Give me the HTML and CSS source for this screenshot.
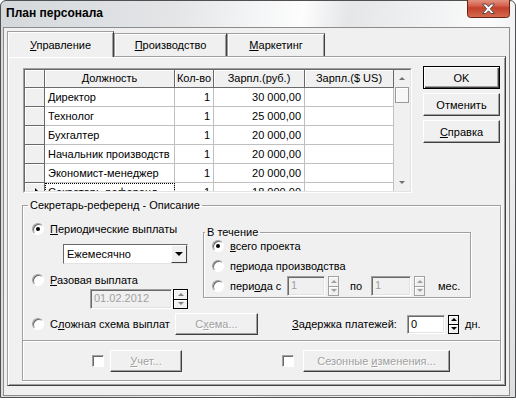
FILE: index.html
```html
<!DOCTYPE html>
<html lang="ru">
<head>
    <meta charset="UTF-8">
    <title>План персонала</title>
    <link rel="stylesheet" href="styles.css">
</head>
<body>
<div class="window">
    <div class="titlebar">
        <div class="title">План персонала</div>
        <div class="close-btn">
            <svg width="43" height="18" viewBox="0 0 43 18">
                <defs>
                    <linearGradient id="cg" x1="0" y1="0" x2="0" y2="1">
                        <stop offset="0" stop-color="#ebb4a6"/>
                        <stop offset="0.45" stop-color="#d5624d"/>
                        <stop offset="0.55" stop-color="#c2402c"/>
                        <stop offset="1" stop-color="#d56c50"/>
                    </linearGradient>
                </defs>
                <rect x="0.5" y="-4" width="42" height="21.5" rx="3" fill="url(#cg)" stroke="#6b2316"/>
                <path d="M15.5 4 L19 4 L21.5 6.8 L24 4 L27.5 4 L23.3 8.8 L27.5 13.5 L24 13.5 L21.5 10.8 L19 13.5 L15.5 13.5 L19.7 8.8 Z" fill="#fff" stroke="#5b4b49" stroke-width="1"/>
            </svg>
        </div>
    </div>

    <div class="client">
        <div class="tabs">
            <div class="tab active"><u>У</u>правление</div>
            <div class="tab tab-prod"><u>П</u>роизводство</div>
            <div class="tab tab-mark"><u>М</u>аркетинг</div>
        </div>

        <div class="panel">
            <div class="top">
                <div class="grid">
                    <div class="grid-inner">
                        <div class="table">
                            <div class="hc"></div>
                            <div class="hc">Должность</div>
                            <div class="hc">Кол-во</div>
                            <div class="hc">Зарпл.(руб.)</div>
                            <div class="hc">Зарпл.($ US)</div>

                            <div class="ic"></div>
                            <div class="c">Директор</div>
                            <div class="c num">1</div>
                            <div class="c num">30 000,00</div>
                            <div class="c"></div>

                            <div class="ic"></div>
                            <div class="c">Технолог</div>
                            <div class="c num">1</div>
                            <div class="c num">25 000,00</div>
                            <div class="c"></div>

                            <div class="ic"></div>
                            <div class="c">Бухгалтер</div>
                            <div class="c num">1</div>
                            <div class="c num">20 000,00</div>
                            <div class="c"></div>

                            <div class="ic"></div>
                            <div class="c">Начальник производств</div>
                            <div class="c num">1</div>
                            <div class="c num">20 000,00</div>
                            <div class="c"></div>

                            <div class="ic"></div>
                            <div class="c">Экономист-менеджер</div>
                            <div class="c num">1</div>
                            <div class="c num">20 000,00</div>
                            <div class="c"></div>

                            <div class="ic current"></div>
                            <div class="c focus">Секретарь-референд</div>
                            <div class="c num">1</div>
                            <div class="c num">18 000,00</div>
                            <div class="c"></div>
                        </div>
                        <div class="vscroll">
                            <div class="sb-btn sb-up"></div>
                            <div class="sb-thumb"></div>
                            <div class="sb-track"></div>
                            <div class="sb-btn sb-down"></div>
                        </div>
                    </div>
                </div>

                <div class="buttons">
                    <button class="btn default">OK</button>
                    <button class="btn">Отменить</button>
                    <button class="btn"><u>С</u>правка</button>
                </div>
            </div>

            <fieldset class="group main-group">
                <legend>Секретарь-референд - Описание</legend>

                <div class="upper">
                    <div class="left-col">
                        <div class="opt opt-first">
                            <span class="radio on"></span>
                            <span><u>П</u>ериодические выплаты</span>
                        </div>
                        <div class="combo">
                            <span class="combo-text">Ежемесячно</span>
                            <span class="combo-btn"></span>
                        </div>
                        <div class="opt opt-second">
                            <span class="radio"></span>
                            <span><u>Р</u>азовая выплата</span>
                        </div>
                        <div class="date-row">
                            <span class="field dis date-field">01.02.2012</span>
                            <span class="spin spin-date"><span class="up"></span><span class="down"></span></span>
                        </div>
                    </div>

                    <fieldset class="group during">
                        <legend>В течение</legend>
                        <div class="opt d1">
                            <span class="radio on"></span>
                            <span><u>в</u>сего проекта</span>
                        </div>
                        <div class="opt d2">
                            <span class="radio"></span>
                            <span>п<u>е</u>риода производства</span>
                        </div>
                        <div class="opt d3">
                            <span class="radio"></span>
                            <span class="lbl-from">пери<u>о</u>да с</span>
                            <span class="field dis from-field">1</span>
                            <span class="spin dis"><span class="up"></span><span class="down"></span></span>
                            <span class="lbl-to">по</span>
                            <span class="field dis to-field">1</span>
                            <span class="spin dis"><span class="up"></span><span class="down"></span></span>
                            <span class="lbl-mes">мес.</span>
                        </div>
                    </fieldset>
                </div>

                <div class="complex-row">
                    <div class="opt">
                        <span class="radio"></span>
                        <span class="lbl-complex">С<u>л</u>ожная схема выплат</span>
                    </div>
                    <button class="btn dis scheme-btn">С<u>х</u>ема...</button>
                    <span class="lbl-delay"><u>З</u>адержка платежей:</span>
                    <span class="field delay-field">0</span>
                    <span class="spin"><span class="up"></span><span class="down"></span></span>
                    <span class="lbl-days">дн.</span>
                </div>

                <div class="bottom-row">
                    <span class="check check-account"></span>
                    <button class="btn dis account-btn"><u>У</u>чет...</button>
                    <span class="check check-season"></span>
                    <button class="btn dis season-btn">Сезонные <u>и</u>зменения...</button>
                </div>
            </fieldset>
        </div>
    </div>
</div>
</body>
</html>
```

FILE: styles.css
```css
* {
    box-sizing: border-box;
}

body {
    margin: 0;
    background: #fff;
    font-family: "Liberation Sans", Arial, sans-serif;
    font-size: 11px;
    color: #000;
}

u {
    text-decoration: underline;
    text-underline-offset: 1px;
}

/* window frame */
.window {
    width: 516px;
    height: 398px;
    display: flex;
    flex-direction: column;
    padding: 0 5px 1px 2px;
    border: 1px solid #505050;
    border-radius: 6px 6px 0 0;
    background: linear-gradient(100deg, #d5d8db 0%, #e3e5e7 30%, #f4f5f6 44%, #fdfdfd 52%, #e4e6e8 60%, #eef0f1 72%, #fbfbfb 84%, #dcdfe2 100%);
    box-shadow: 0 2px 0 #3c9fae;
}

.titlebar {
    flex: none;
    height: 26px;
    display: flex;
    justify-content: space-between;
    align-items: flex-start;
}

.title {
    margin: 5px 0 0 3px;
    font-size: 12px;
    font-weight: bold;
    line-height: 14px;
}

.close-btn {
    margin-top: -1px;
    height: 18px;
}

.close-btn svg {
    display: block;
}

.client {
    flex: 1;
    display: flex;
    flex-direction: column;
    padding: 0 3px;
    background: #f0f0f0;
    border: 1px solid #8c8c8c;
}

/* tabs */
.tabs {
    flex: none;
    display: flex;
    align-items: flex-end;
    height: 29px;
    margin-bottom: -1px;
    position: relative;
    z-index: 1;
}

.tab {
    height: 23px;
    margin-bottom: 1px;
    padding-top: 4px;
    line-height: 14px;
    text-align: center;
    background: #f0f0f0;
    border: 1px solid;
    border-bottom: none;
    border-color: #a0a0a0 #404040 transparent #a0a0a0;
    box-shadow: inset 1px 1px #fff, inset -1px 0 #a0a0a0;
}

.tab.active {
    width: 107px;
    height: 26px;
    margin-bottom: 0;
    padding-top: 6px;
}

.tab-prod {
    width: 113px;
}

.tab-mark {
    width: 98px;
}

.panel {
    flex: none;
    display: flex;
    flex-direction: column;
    padding: 9px 4px 4px 14px;
    border: 1px solid;
    border-color: #a0a0a0 #404040 #404040 #a0a0a0;
    box-shadow: inset 1px 1px #fff, inset -1px -1px #a0a0a0;
}

.top {
    display: flex;
    align-items: flex-start;
}

/* data grid */
.grid {
    width: 389px;
    height: 125px;
    margin: 2px 0 0 1px;
    border: 1px solid;
    border-color: #a0a0a0 #fff #fff #a0a0a0;
}

.grid-inner {
    height: 100%;
    display: flex;
    overflow: hidden;
    border: 1px solid;
    border-color: #696969 #e3e3e3 #e3e3e3 #696969;
}

.table {
    width: 369px;
    flex: none;
    display: grid;
    grid-template-columns: 20px 130px 39px 91px 89px;
    grid-template-rows: 18px;
    grid-auto-rows: 19px;
    align-content: start;
    background: #fff;
}

.hc,
.ic {
    background: #f0f0f0;
    border-right: 1px solid #696969;
    border-bottom: 1px solid #696969;
    box-shadow: inset 1px 1px #fff;
}

.hc {
    text-align: center;
    line-height: 17px;
}

.ic.current {
    display: flex;
    align-items: center;
    justify-content: flex-end;
    padding-right: 5px;
}

.ic.current::after {
    content: '';
    border-top: 4px solid transparent;
    border-bottom: 4px solid transparent;
    border-left: 4px solid #000;
}

.c {
    padding: 0 3px;
    line-height: 18px;
    white-space: nowrap;
    overflow: hidden;
    border-right: 1px solid #c0c0c0;
    border-bottom: 1px solid #c0c0c0;
}

.c.num {
    text-align: right;
}

.c.focus {
    outline: 1px dotted #000;
    outline-offset: -1px;
}

.vscroll {
    width: 16px;
    flex: none;
    display: flex;
    flex-direction: column;
    background: #f0f0f0;
}

.sb-btn {
    height: 17px;
    display: flex;
    align-items: center;
    justify-content: center;
}

.sb-up::after {
    content: '';
    border-left: 3px solid transparent;
    border-right: 3px solid transparent;
    border-bottom: 3px solid #707070;
}

.sb-down::after {
    content: '';
    border-left: 3px solid transparent;
    border-right: 3px solid transparent;
    border-top: 3px solid #707070;
}

.sb-thumb {
    height: 16px;
    margin: 0 1px;
    background: #f7f7f7;
    border: 1px solid #9a9a9a;
    box-shadow: inset 1px 1px #fff;
}

.sb-track {
    flex: 1;
}

/* buttons */
.buttons {
    display: flex;
    flex-direction: column;
    gap: 4px;
    margin-left: 11px;
}

.btn {
    width: 77px;
    height: 23px;
    padding: 0;
    font: inherit;
    color: #000;
    background: #f0f0f0;
    border: 1px solid;
    border-color: #fff #404040 #404040 #fff;
    box-shadow: inset -1px -1px #a0a0a0;
}

.btn.default {
    border-color: #000;
    box-shadow: inset 1px 1px #fff, inset -1px -1px #404040, inset -2px -2px #a0a0a0;
}

.btn.dis {
    color: #a0a0a0;
    text-shadow: 1px 1px 0 #fff;
}

/* group boxes */
.group {
    margin: 0;
    padding: 0;
    min-width: 0;
    border: 1px solid #a0a0a0;
    box-shadow: inset 1px 1px #fff, 1px 1px #fff;
}

.group legend {
    padding: 0 2px;
    line-height: 13px;
}

.main-group {
    margin-top: 6px;
}

.main-group > legend {
    margin-left: 5px;
}

.upper {
    display: flex;
    align-items: flex-start;
}

.left-col {
    width: 180px;
    flex: none;
    padding-left: 9px;
}

.opt {
    display: flex;
    align-items: center;
    height: 16px;
    white-space: nowrap;
}

.radio {
    flex: none;
    width: 12px;
    height: 12px;
    margin-right: 6px;
    display: flex;
    align-items: center;
    justify-content: center;
    border-radius: 50%;
    background: #fff;
    border: 1px solid;
    border-color: #a0a0a0 #fff #fff #a0a0a0;
    box-shadow: inset 1px 1px #696969;
}

.radio.on::after {
    content: '';
    width: 4px;
    height: 4px;
    border-radius: 50%;
    background: #000;
}

.opt-first {
    margin-top: 9px;
}

.opt-second {
    margin-top: 8px;
}

.combo {
    width: 125px;
    height: 20px;
    margin: 7px 0 0 31px;
    display: flex;
    background: #fff;
    border: 1px solid;
    border-color: #696969 #e3e3e3 #e3e3e3 #696969;
}

.combo-text {
    flex: 1;
    padding-left: 3px;
    line-height: 18px;
}

.combo-btn {
    width: 16px;
    display: flex;
    align-items: center;
    justify-content: center;
    background: #f0f0f0;
    border: 1px solid;
    border-color: #fff #404040 #404040 #fff;
}

.combo-btn::after {
    content: '';
    border-left: 4px solid transparent;
    border-right: 4px solid transparent;
    border-top: 4px solid #000;
}

.field {
    flex: none;
    height: 20px;
    padding-left: 3px;
    line-height: 16px;
    background: #fff;
    border: 1px solid;
    border-color: #a0a0a0 #fff #fff #a0a0a0;
    box-shadow: inset 1px 1px #696969, inset -1px -1px #e3e3e3;
}

.field.dis {
    color: #a0a0a0;
    background: #f0f0f0;
}

.date-row {
    display: flex;
    margin: 1px 0 0 58px;
}

.date-field {
    width: 82px;
}

.spin {
    flex: none;
    width: 11px;
    height: 20px;
    display: flex;
    flex-direction: column;
    border: 1px solid #000;
}

.spin > span {
    flex: 1;
    display: flex;
    align-items: center;
    justify-content: center;
    background: #f0f0f0;
    box-shadow: inset 1px 1px #fff;
}

.spin > span + span {
    border-top: 1px solid #000;
}

.spin .up::after {
    content: '';
    border-left: 3px solid transparent;
    border-right: 3px solid transparent;
    border-bottom: 3px solid #000;
}

.spin .down::after {
    content: '';
    border-left: 3px solid transparent;
    border-right: 3px solid transparent;
    border-top: 3px solid #000;
}

.spin.dis {
    border-color: #a0a0a0;
}

.spin.dis > span + span {
    border-top-color: #a0a0a0;
}

.spin.dis .up::after {
    border-bottom-color: #a0a0a0;
}

.spin.dis .down::after {
    border-top-color: #a0a0a0;
}

.spin-date {
    width: 15px;
    margin-left: 1px;
}

.spin-date .up::after {
    border-bottom-color: #808080;
}

.spin-date .down::after {
    border-top-color: #808080;
}

/* "В течение" */
.during {
    width: 268px;
    margin-top: 14px;
    padding: 0 0 1px 8px;
}

.during > legend {
    margin-left: -7px;
}

.d1 {
    height: 14px;
}

.d2 {
    height: 20px;
    margin-top: 3px;
}

.d3 {
    height: 20px;
}

.lbl-from {
    width: 57px;
}

.from-field {
    width: 38px;
}

.d3 .spin {
    margin-left: 3px;
}

.lbl-to {
    width: 32px;
    padding-left: 11px;
}

.to-field {
    width: 40px;
}

.lbl-mes {
    margin-left: 13px;
}

/* complex scheme row */
.complex-row {
    display: flex;
    align-items: center;
    height: 22px;
    margin-top: 4px;
    padding-left: 9px;
}

.lbl-complex {
    width: 125px;
}

.scheme-btn {
    width: 83px;
    height: 22px;
}

.lbl-delay {
    width: 115px;
    margin-left: 34px;
    white-space: nowrap;
}

.delay-field {
    width: 38px;
    height: 19px;
}

.complex-row .spin {
    height: 19px;
    margin-left: 3px;
}

.lbl-days {
    margin-left: 6px;
}

.bottom-row {
    display: flex;
    align-items: center;
    margin-top: 5px;
    padding: 9px 0 8px;
    border-top: 1px solid #a0a0a0;
    box-shadow: inset 0 1px #fff;
}

.check {
    flex: none;
    width: 12px;
    height: 12px;
    background: #fff;
    border: 1px solid;
    border-color: #a0a0a0 #fff #fff #a0a0a0;
    box-shadow: inset 1px 1px #696969;
}

.check-account {
    margin-left: 69px;
}

.account-btn {
    width: 72px;
    height: 22px;
    margin-left: 6px;
}

.check-season {
    margin-left: 100px;
}

.season-btn {
    width: 147px;
    height: 22px;
    margin-left: 9px;
}
```
